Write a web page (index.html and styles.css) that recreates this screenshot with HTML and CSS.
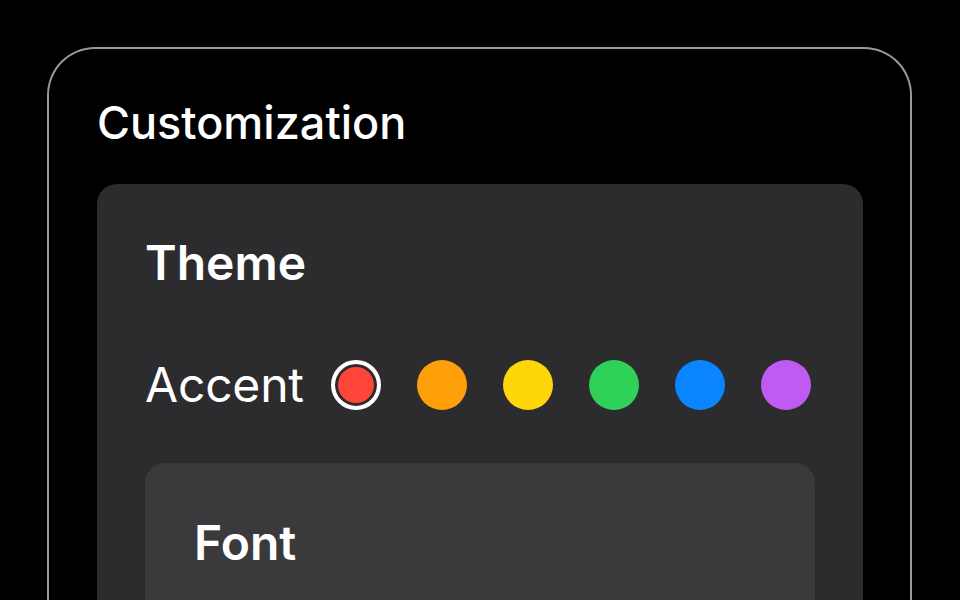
FILE: index.html
```html
<!DOCTYPE html>
<html lang="en">
<head>
<meta charset="utf-8">
<title>Customization</title>
<link rel="stylesheet" href="styles.css">
</head>
<body>
<main class="panel">
  <h1 class="panel-title">Customization</h1>
  <section class="card">
    <h2 class="card-title">Theme</h2>
    <div class="accent-row">
      <span class="accent-label">Accent</span>
      <div class="swatches">
        <span class="swatch swatch-red selected"></span>
        <span class="swatch swatch-orange"></span>
        <span class="swatch swatch-yellow"></span>
        <span class="swatch swatch-green"></span>
        <span class="swatch swatch-blue"></span>
        <span class="swatch swatch-purple"></span>
      </div>
    </div>
    <section class="subcard">
      <h3 class="card-title">Font</h3>
    </section>
  </section>
</main>
</body>
</html>
```

FILE: styles.css
```css
html, body {
  margin: 0;
  padding: 0;
  background: #000;
  height: 100%;
  overflow: hidden;
}
body {
  font-family: Inter, "Liberation Sans", sans-serif;
  color: #fff;
}
.panel {
  margin: 47px 48px 0 47px;
  border: 2px solid #98989d;
  border-bottom: none;
  border-radius: 48px 48px 0 0;
  padding: 0 47px 0 48px;
  min-height: 600px;
  box-sizing: border-box;
}
.panel-title {
  margin: 0;
  padding: 48px 0 35px;
  font-size: 45px;
  line-height: 52px;
  font-weight: 500;
  letter-spacing: 0;
}
.card {
  background: #2c2c2e;
  border-radius: 20px;
  padding: 49px 48px 48px;
  min-height: 500px;
}
.card-title {
  margin: 0;
  font-size: 48px;
  line-height: 60px;
  font-weight: 600;
  letter-spacing: 0;
}
.accent-row {
  display: flex;
  align-items: center;
  margin-top: 62px;
  height: 60px;
}
.accent-label {
  font-size: 48px;
  line-height: 60px;
  font-weight: 400;
  letter-spacing: -0.2px;
  margin-right: 27px;
}
.swatches {
  display: flex;
  gap: 36px;
}
.swatch {
  width: 50px;
  height: 50px;
  border-radius: 50%;
  box-sizing: border-box;
  display: block;
}
.swatch.selected {
  border: 4px solid #fff;
  box-shadow: inset 0 0 0 3px #2c2c2e;
}
.swatch-red { background: #ff453a; }
.swatch-orange { background: #ff9f0a; }
.swatch-yellow { background: #ffd60a; }
.swatch-green { background: #30d158; }
.swatch-blue { background: #0a84ff; }
.swatch-purple { background: #bf5af2; }
.subcard {
  margin-top: 48px;
  background: #3a3a3c;
  border-radius: 20px;
  padding: 50px 49px;
  min-height: 300px;
}
```
